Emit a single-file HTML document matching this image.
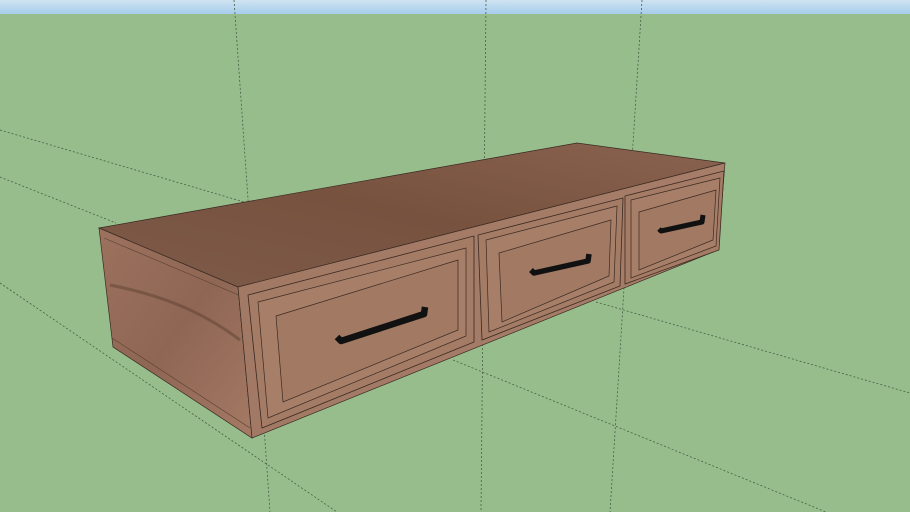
<!DOCTYPE html>
<html><head><meta charset="utf-8"><style>html,body{margin:0;padding:0;overflow:hidden}svg{display:block}</style></head>
<body>
<svg width="910" height="512" viewBox="0 0 910 512" xmlns="http://www.w3.org/2000/svg">
<defs>
<linearGradient id="sky" x1="0" y1="0" x2="0" y2="1"><stop offset="0" stop-color="#cfe3f1"/><stop offset="1" stop-color="#a6cdeb"/></linearGradient>
<linearGradient id="top" x1="0" y1="1" x2="1" y2="0"><stop offset="0" stop-color="#7e5a4a"/><stop offset="0.5" stop-color="#77523f"/><stop offset="1" stop-color="#8a6350"/></linearGradient>
<linearGradient id="side" x1="0" y1="0" x2="1" y2="1"><stop offset="0" stop-color="#9c725e"/><stop offset="0.5" stop-color="#8f6654"/><stop offset="1" stop-color="#a47a64"/></linearGradient>
<linearGradient id="front" x1="0" y1="0" x2="1" y2="0"><stop offset="0" stop-color="#a27964"/><stop offset="1" stop-color="#a67d68"/></linearGradient>
</defs>
<rect width="910" height="512" fill="#98bd8d"/>
<rect width="910" height="14" fill="url(#sky)"/>
<g stroke="#4a5e46" stroke-width="0.8" stroke-dasharray="2,2" fill="none">
<line x1="234" y1="0" x2="270" y2="512"/>
<line x1="486" y1="0" x2="481" y2="512"/>
<line x1="642" y1="0" x2="610" y2="512"/>
<line x1="0" y1="130" x2="244" y2="202"/>
<line x1="0" y1="177" x2="116" y2="223"/>
<line x1="0" y1="283" x2="337" y2="512"/>
<line x1="596" y1="302" x2="910" y2="393"/>
<line x1="453" y1="360" x2="826" y2="512"/>
</g>
<polygon points="99,228 577,143 725,163 238,287" fill="url(#top)" stroke="#3a2a22" stroke-width="0.7"/>
<polygon points="99,228 238,287 252,438 113,347" fill="url(#side)" stroke="#3a2a22" stroke-width="0.7"/>
<path d="M104,238 L241,296 M112,338 L250,428" stroke="#5a3e30" stroke-width="0.6" fill="none"/>
<path d="M110,285 C160,295 200,310 240,340" stroke="#5e4032" stroke-width="3" fill="none" opacity="0.5"/>
<polygon points="238,287 725,163 718,250 252,438" fill="url(#front)" stroke="#3a2a22" stroke-width="0.7"/>
<polygon points="248,295 474,236 474,342 262,428" fill="#a47b65" stroke="#3a2a22" stroke-width="0.8"/>
<polygon points="258,302 466,248 466,336 268,418" fill="#a77e68" stroke="#3a2a22" stroke-width="0.7"/>
<polygon points="276,316 458,260 458,330 283,402" fill="#a27963" stroke="#3a2a22" stroke-width="0.7"/>
<polygon points="478,235 623,198 620,286 482,340" fill="#a47b65" stroke="#3a2a22" stroke-width="0.8"/>
<polygon points="486,240 617,206 614,282 489,332" fill="#a77e68" stroke="#3a2a22" stroke-width="0.7"/>
<polygon points="499,253 611,220 609,276 502,322" fill="#a27963" stroke="#3a2a22" stroke-width="0.7"/>
<polygon points="625,196 724,171 719,250 625,284" fill="#a47b65" stroke="#3a2a22" stroke-width="0.8"/>
<polygon points="631,200 720,178 716,246 631,278" fill="#a77e68" stroke="#3a2a22" stroke-width="0.7"/>
<polygon points="639,212 716,190 713,240 639,270" fill="#a27963" stroke="#3a2a22" stroke-width="0.7"/>
<path d="M337,337 L341,341 L424,314 L425,307" stroke="#111" stroke-width="6.5" fill="none" stroke-linejoin="round"/>
<path d="M531,270 L534,273 L588,261 L589,254" stroke="#111" stroke-width="5.5" fill="none" stroke-linejoin="round"/>
<path d="M659,229 L661,231 L702,222 L703,215" stroke="#111" stroke-width="5" fill="none" stroke-linejoin="round"/>
</svg>
</body></html>
